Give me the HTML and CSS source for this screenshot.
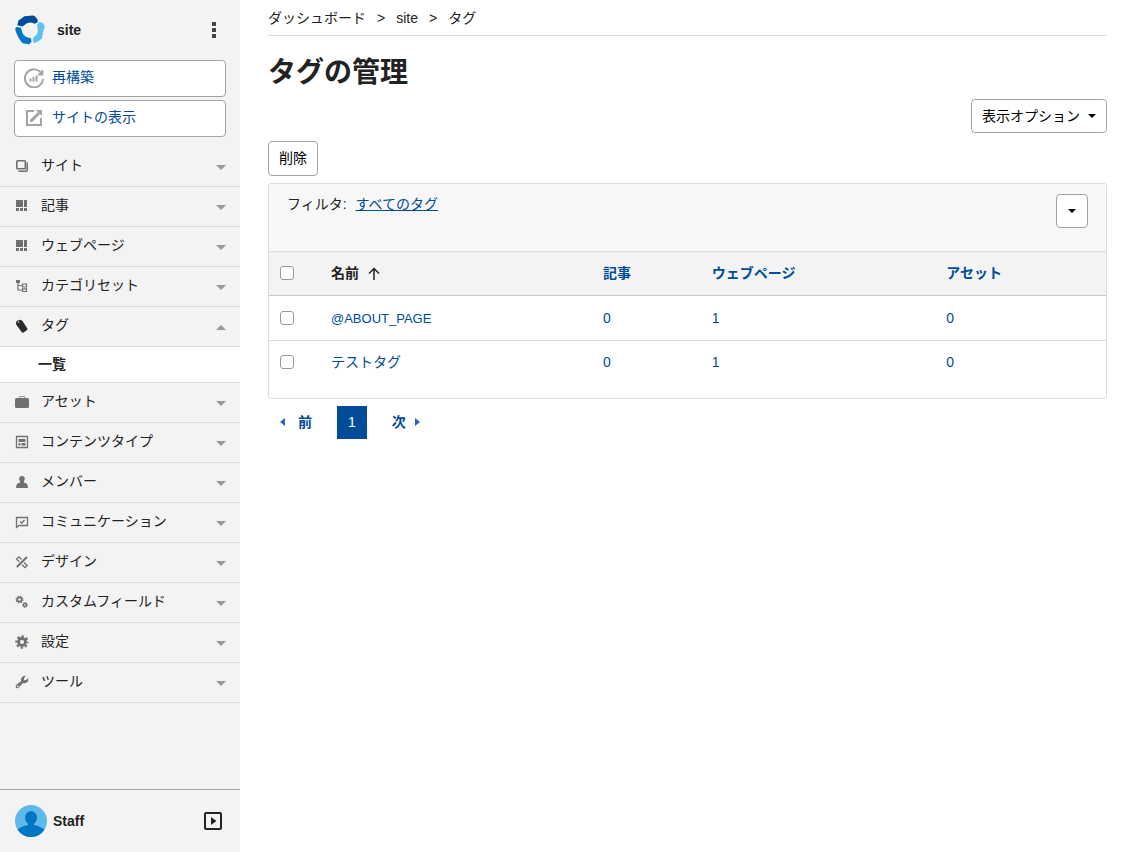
FILE: index.html
```html
<!DOCTYPE html>
<html lang="ja">
<head>
<meta charset="utf-8">
<meta name="viewport" content="width=device-width, initial-scale=1">
<title>タグの管理</title>
<link rel="stylesheet" href="styles.css">
</head>
<body>
<div class="app">
  <aside class="sidebar">
    <header class="site-head">
      <svg class="logo" viewBox="0 0 30 30" aria-hidden="true">
        <path fill="#004c9c" d="M3.500 5.500 9.500 1.300 17.500.4Q20.500.6 22.800 5L22.600 7.300 19.500 8.700Q15.500 6.600 12.300 8L7.500 11.500 2.200 10.300Z"/>
        <path fill="#0078c8" d="M1 12 5.800 12.600 7.300 17.500Q8.300 20.700 11.300 21.900L16 23.300 16.500 27 14 29.300 7.500 28.300Q4 24.500 1.500 18.500L.2 14.500Z"/>
        <path fill="#5fbfee" d="M22 9.800 24.500 7 28.300 8.300 29.800 12 28 16.500 27 23.200Q23.500 27 19.500 28.200L17.700 25.500 18.600 22.200Q22.200 20.300 22.700 17.200 23.200 13.400 22 9.800Z"/>
      </svg>
      <a class="site-name" href="#">site</a>
      <button class="icon-button more" type="button" aria-label="メニュー">
        <svg viewBox="0 0 4 16" width="4" height="16"><path fill="#444" d="M0 0h4v4H0zM0 6h4v4H0zM0 12h4v4H0z"/></svg>
      </button>
    </header>
    <div class="site-actions">
      <a class="action" href="#">
        <svg viewBox="0 0 20 20" fill="none" stroke="#a3a3a3" stroke-width="2"><path d="M17.500 5.500A9 9 0 1 0 18.900 11M18.300 2V6.500H14M6.500 13.500V10.500M9.500 13.500V9M12.500 13.500V7.500"/></svg>
        再構築
      </a>
      <a class="action" href="#">
        <svg viewBox="0 0 20 20" fill="none" stroke="#a3a3a3" stroke-width="2"><path d="M10 3H3V17H17V10"/><path stroke-width="3" d="M6.500 13.500 15 5"/><path fill="#a3a3a3" stroke="none" d="M12 2H18V8Z"/></svg>
        サイトの表示
      </a>
    </div>
    <nav class="menu">
      <a class="menu-item" href="#">
        <svg class="menu-icon" viewBox="0 0 14 14"><rect x="1.800" y="1.800" width="8.500" height="8" rx=".8" fill="none" stroke="#707070" stroke-width="1.600"/><path fill="none" stroke="#707070" stroke-width="1.600" d="M3.500 12.200H11Q12.200 12.200 12.200 11V3.500"/></svg>
        サイト<span class="chevron"></span></a>
      <a class="menu-item" href="#">
        <svg class="menu-icon" viewBox="0 0 14 14" fill="#707070"><path d="M1 1h7v7H1zM9 1h3v7H9zM1 9h3v3H1zM5 9h3v3H5zM9 9h3v3H9z"/></svg>
        記事<span class="chevron"></span></a>
      <a class="menu-item" href="#">
        <svg class="menu-icon" viewBox="0 0 14 14" fill="#707070"><path d="M1 1h7v7H1zM9 1h3v7H9zM1 9h3v3H1zM5 9h3v3H5zM9 9h3v3H9z"/></svg>
        ウェブページ<span class="chevron"></span></a>
      <a class="menu-item" href="#">
        <svg class="menu-icon" viewBox="0 0 14 14" fill="none" stroke="#707070"><path fill="#707070" stroke="none" d="M1 1h4v3H1z"/><path stroke-width="1.200" d="M3 3V11H7M3 6.500H7M7.500 5H11.500V8H7.500ZM7.500 9.800H11.500V12.500H7.500Z"/></svg>
        カテゴリセット<span class="chevron"></span></a>
      <a class="menu-item" href="#" aria-expanded="true">
        <svg class="menu-icon" viewBox="0 0 14 14"><path fill="#2b2b2b" fill-rule="evenodd" d="M1 3.500 2 1.800 5.500.8 7.300 1.800 12.500 9.800 12 11 8.200 13.700 7 13.500 1.200 5.500ZM3.500 2.500A.7.700 0 1 0 4.200 3.600.7.700 0 0 0 3.500 2.500Z"/></svg>
        タグ<span class="chevron up"></span></a>
      <a class="submenu-item" href="#" aria-current="page">一覧</a>
      <a class="menu-item" href="#">
        <svg class="menu-icon" viewBox="0 0 14 14"><path fill="none" stroke="#999" d="M4.500 3V1.500H9.500V3"/><rect y="3" width="14" height="10" rx="1.500" fill="#707070"/></svg>
        アセット<span class="chevron"></span></a>
      <a class="menu-item" href="#">
        <svg class="menu-icon" viewBox="0 0 14 14"><path fill="none" stroke="#707070" stroke-width="1.300" d="M1.500 1.500H12.500V12.500H1.500Z"/><path fill="#707070" d="M3.500 4h7v3h-7zM3.500 8h2v2.500h-2zM6.500 8h4v2.500h-4z"/></svg>
        コンテンツタイプ<span class="chevron"></span></a>
      <a class="menu-item" href="#">
        <svg class="menu-icon" viewBox="0 0 14 14"><path fill="#707070" d="M7 1C3.500 1 3.800 4.500 5 6.300V7.500L2.500 8.500Q1 9.500 1 13H13Q13 9.500 11.500 8.500L9 7.500V6.300C10.200 4.500 10.500 1 7 1Z"/></svg>
        メンバー<span class="chevron"></span></a>
      <a class="menu-item" href="#">
        <svg class="menu-icon" viewBox="0 0 14 14" fill="none" stroke="#707070" stroke-width="1.300"><path d="M1.500 2.500H12.500V10.500H4L1.500 12.500ZM5 6.500 6.800 8 9.500 5"/></svg>
        コミュニケーション<span class="chevron"></span></a>
      <a class="menu-item" href="#">
        <svg class="menu-icon" viewBox="0 0 14 14" fill="none" stroke="#707070" stroke-width="1.300"><path stroke-width="2" d="M1.800 12 12 2"/><path d="M6.500 4.500 4 1.800 1.500 4 4.200 6.800M9 7.500 12.200 10.500 10 12.700 7 9.800"/></svg>
        デザイン<span class="chevron"></span></a>
      <a class="menu-item" href="#">
        <svg class="menu-icon" viewBox="0 0 14 14" fill="none" stroke="#707070"><circle cx="4.500" cy="4.500" r="2.200" stroke-width="1.800"/><circle cx="4.500" cy="4.500" r="3.400" stroke-width="1.200" stroke-dasharray="1.300 1.370"/><circle cx="10" cy="10" r="1.600" stroke-width="1.500"/><circle cx="10" cy="10" r="2.500" stroke-dasharray="1 .963"/></svg>
        カスタムフィールド<span class="chevron"></span></a>
      <a class="menu-item" href="#">
        <svg class="menu-icon" viewBox="0 0 14 14" fill="none" stroke="#707070"><circle cx="7" cy="7" r="3.500" stroke-width="2.800"/><circle cx="7" cy="7" r="5.600" stroke-width="2.200" stroke-dasharray="2.200 2.198" stroke-dashoffset="1.100"/></svg>
        設定<span class="chevron"></span></a>
      <a class="menu-item" href="#">
        <svg class="menu-icon" viewBox="0 0 14 14"><path fill="#707070" fill-rule="evenodd" d="M11 .8 8.800 3.300 9.200 5 10.800 5.200 13.200 3Q14 6 11.800 7.600 10.200 8.600 8 8L4.200 12.200Q2.500 14 .9 12.700 0 11 1.600 9.600L6 6.200Q5.500 3.800 7 2.200 8.600.6 11 .8ZM2.800 10.400A.9.9 0 1 0 2.900 12.200.9.9 0 0 0 2.800 10.400Z"/></svg>
        ツール<span class="chevron"></span></a>
    </nav>
    <footer class="user">
      <svg class="avatar" viewBox="0 0 32 32" aria-hidden="true">
        <circle cx="16" cy="16" r="16" fill="#5cb9e8"/>
        <path fill="#0075c2" d="M2.600 24.800Q6 21.500 13 20V18.500C8.500 14 9.500 6.500 16 6.500S23.500 14 19 18.500V20Q26 21.500 29.400 24.800A16 16 0 0 1 2.600 24.800Z"/>
        <ellipse cx="16" cy="13" rx="5.700" ry="6.700" fill="#0075c2"/>
      </svg>
      <a class="user-name" href="#">Staff</a>
      <button class="icon-button" type="button" aria-label="開く">
        <svg viewBox="0 0 18 18" width="18" height="18"><rect x="1" y="1" width="16" height="16" rx="1" fill="none" stroke="#222" stroke-width="2"/><path fill="#222" d="M7 5V13L12.500 9Z"/></svg>
      </button>
    </footer>
  </aside>

  <main class="content">
    <nav class="breadcrumb">
      <a href="#">ダッシュボード</a><span>&gt;</span><a href="#">site</a><span>&gt;</span><a href="#">タグ</a>
    </nav>
    <h1>タグの管理</h1>
    <div class="options"><button class="btn" type="button">表示オプション<span class="caret"></span></button></div>
    <div class="list-actions"><button class="btn" type="button">削除</button></div>
    <section class="card">
      <div class="filter">
        <p>フィルタ: <a href="#">すべてのタグ</a></p>
        <button class="btn toggle" type="button" aria-label="フィルタを開く"><span class="caret"></span></button>
      </div>
      <table>
        <colgroup><col class="col-check"><col class="col-name"><col class="col-entry"><col class="col-page"><col></colgroup>
        <thead>
          <tr>
            <th scope="col"><input type="checkbox" aria-label="すべて選択"></th>
            <th scope="col"><a class="sorted" href="#">名前<svg viewBox="0 0 12 14" width="12" height="14" fill="none" stroke="#222" stroke-width="1.500"><path d="M6 14V3M1 7.500 6 2.500 11 7.500"/></svg></a></th>
            <th scope="col"><a href="#">記事</a></th>
            <th scope="col"><a href="#">ウェブページ</a></th>
            <th scope="col"><a href="#">アセット</a></th>
          </tr>
        </thead>
        <tbody>
          <tr>
            <td><input type="checkbox" aria-label="@ABOUT_PAGE"></td>
            <td><a class="latin" href="#">@ABOUT_PAGE</a></td><td><a href="#">0</a></td><td><a href="#">1</a></td><td><a href="#">0</a></td>
          </tr>
          <tr>
            <td><input type="checkbox" aria-label="テストタグ"></td>
            <td><a href="#">テストタグ</a></td><td><a href="#">0</a></td><td><a href="#">1</a></td><td><a href="#">0</a></td>
          </tr>
        </tbody>
      </table>
    </section>
    <nav class="pager" aria-label="ページ">
      <a href="#"><span class="arrow prev"></span>前</a>
      <a class="current" href="#" aria-current="page">1</a>
      <a class="forward" href="#">次<span class="arrow next"></span></a>
    </nav>
  </main>
</div>
</body>
</html>
```

FILE: styles.css
```css
* { box-sizing: border-box; }

body {
  margin: 0;
  background: #fff;
  color: #222;
  font: 14px/20px "Liberation Sans", "Noto Sans CJK JP", sans-serif;
}

a { color: #004c98; text-decoration: none; }
svg { display: block; flex: none; }
button { font: inherit; cursor: pointer; }
h1, p { margin: 0; }

.app {
  display: grid;
  grid-template-columns: 240px minmax(0, 1fr);
  min-height: 100vh;
}

/* Sidebar */
.sidebar {
  display: flex;
  flex-direction: column;
  background: #f3f3f3;
}

.site-head {
  display: flex;
  align-items: center;
  height: 60px;
  padding: 0 20px 0 15px;
}

.logo { width: 30px; height: 30px; }

.site-name, .user-name { flex: 1; color: #222; font-weight: bold; }
.site-name { padding-left: 12px; }
.user-name { padding-left: 6px; }

.icon-button {
  display: flex;
  padding: 0;
  border: 0;
  background: none;
}

.more { padding: 0 4px; }

.site-actions {
  display: grid;
  gap: 3px;
  padding: 0 14px 10px;
}

.action {
  display: flex;
  align-items: center;
  gap: 8px;
  height: 37px;
  padding: 0 9px 3px;
  border: 1px solid #a3a3a3;
  border-radius: 4px;
  background: #fff;
}

.action svg { width: 20px; height: 20px; margin-top: 2px; }

.menu-item {
  display: flex;
  align-items: center;
  height: 40px;
  padding: 0 14px 4px 15px;
  border-bottom: 1px solid #dcdcdc;
  color: #222;
}

.menu-icon { width: 14px; height: 14px; margin: 3px 12px 0 0; }

.chevron, .caret {
  border: 5px solid transparent;
  border-top-color: #999;
  border-bottom: 0;
}

.chevron { margin: 6px 0 0 auto; }

.chevron.up {
  border-top: 0;
  border-bottom: 5px solid #999;
}

.submenu-item {
  display: block;
  height: 36px;
  padding: 7px 38px;
  border-bottom: 1px solid #dcdcdc;
  background: #fff;
  color: #222;
  font-weight: bold;
}

.user {
  display: flex;
  align-items: center;
  height: 63px;
  margin-top: auto;
  padding: 0 18px 0 15px;
  border-top: 1px solid #a3a3a3;
}

.avatar { width: 32px; height: 32px; }

/* Content */
.content { padding: 0 28px 28px; }

.breadcrumb {
  display: flex;
  gap: 11px;
  height: 36px;
  padding-top: 8px;
  border-bottom: 1px solid #dcdcdc;
}

.breadcrumb a { color: #222; }

h1 { padding: 17px 0 6px; font-size: 28px; line-height: 40px; }

.options { display: flex; justify-content: flex-end; }
.list-actions { display: flex; padding: 8px 0 7px; }

.btn {
  display: flex;
  align-items: center;
  gap: 8px;
  height: 34px;
  padding: 0 10px;
  border: 1px solid #a3a3a3;
  border-radius: 4px;
  background: #fff;
  color: #000;
}

.list-actions .btn { height: 35px; padding-bottom: 2px; }

.caret { border-width: 4px 4px 0; border-top-color: #000; }

.card {
  border: 1px solid #dcdcdc;
  border-radius: 3px;
  padding-bottom: 13px;
}

.filter {
  display: flex;
  align-items: flex-start;
  justify-content: space-between;
  height: 67px;
  padding: 10px 18px;
  background: #f7f7f7;
}

.filter a { margin-left: 5px; text-decoration: underline; }
.toggle { padding: 0 11px; }

table {
  width: 100%;
  table-layout: fixed;
  border-collapse: collapse;
}

.col-check { width: 50px; }
.col-name { width: 32.5%; }
.col-entry { width: 13%; }
.col-page { width: 28%; }

th, td {
  height: 44px;
  padding: 0 12px 2px;
  text-align: left;
}

th:first-child, td:first-child { padding-left: 11px; }
tbody tr:first-child td { height: 45px; padding-bottom: 0; }

th {
  border-top: 1px solid #dcdcdc;
  border-bottom: 1px solid #c8c8c8;
  background: #f3f3f3;
}

tbody tr + tr td { border-top: 1px solid #dcdcdc; }

.latin { font-size: 13px; }

.sorted {
  display: inline-flex;
  align-items: center;
  gap: 9px;
  color: #222;
}

input[type="checkbox"] {
  appearance: none;
  display: block;
  width: 14px;
  height: 14px;
  margin: 0;
  border: 1px solid #999;
  border-radius: 3px;
  background: #fff;
}

input[type="checkbox"]:checked { background: #004c98; }

.pager {
  display: flex;
  gap: 13px;
  padding-top: 7px;
}

.pager a {
  display: flex;
  align-items: center;
  gap: 13px;
  height: 33px;
  padding: 0 12px;
  font-weight: bold;
}

.pager .current {
  padding: 0 11px;
  background: #004c98;
  color: #fff;
  font-weight: normal;
}

.pager .forward { gap: 9px; }

.arrow { border: 4px solid transparent; }
.prev { border-right: 5px solid #2a65b8; border-left: 0; }
.next { border-left: 5px solid #2a65b8; border-right: 0; }
```
